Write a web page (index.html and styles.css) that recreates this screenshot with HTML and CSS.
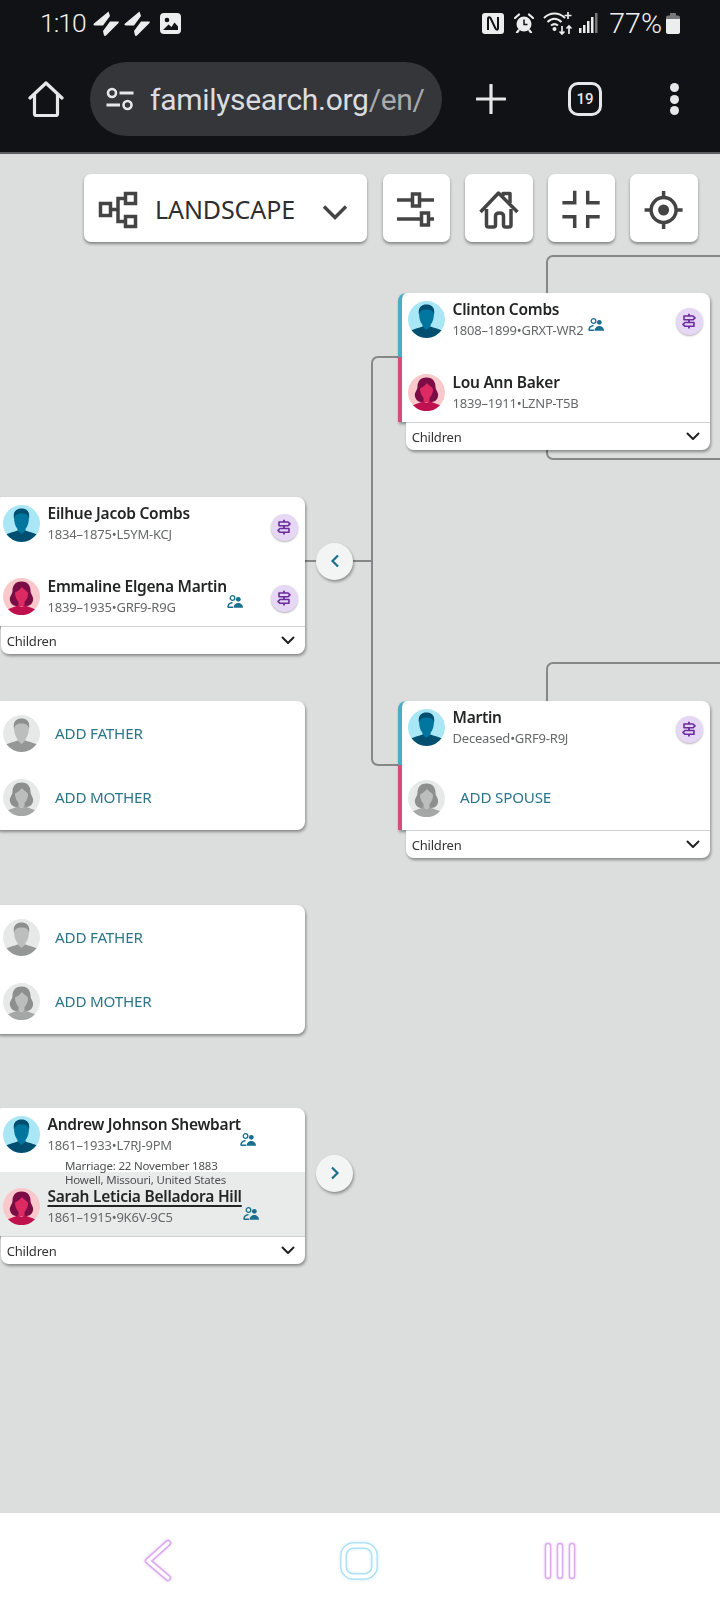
FILE: index.html
```html
<!DOCTYPE html>
<html lang="en">
<head>
<meta charset="utf-8">
<title>FamilySearch tree</title>
<link rel="stylesheet" href="styles.css">
</head>
<body>
<svg class="defs" aria-hidden="true">
  <symbol id="male" viewBox="0 0 37 37">
    <circle cx="18.5" cy="18.5" r="18.5" fill="#a9e6f6"/>
    <path d="M11 11C11 6 14 4 18.5 4S26 6 26 11C26 17 25 21 22.5 24V28L18.5 30 14.5 28V24C12 21 11 17 11 11Z" fill="#00769e"/>
    <path d="M11 14C9.500 6 14 3.500 18.500 3.500S27.500 6 26 14C25.500 10 23 8.500 18.500 8.500S11.500 10 11 14Z" fill="#004e70"/>
    <path d="M3.500 29.300C7 27.500 11 27 14.500 25.500L18.500 29 22.500 25.500C26 27 30 27.500 33.500 29.300A18.500 18.500 0 0 1 3.500 29.300Z" fill="#004e70"/>
  </symbol>
  <symbol id="female" viewBox="0 0 37 37">
    <circle cx="18.5" cy="18.5" r="18.500" fill="#f9c8cb"/>
    <path d="M18.500 3.500C11.500 3.500 9.500 8.500 9.500 12.500C9.500 16.500 6 18.500 7 22.500C8 27 11.500 28 14 28H23C25.500 28 29 27 30 22.500C31 18.500 27.500 16.500 27.500 12.500C27.500 8.500 25.500 3.500 18.500 3.500Z" fill="#7a0c46"/>
    <path d="M12 14.500C14.500 13.500 17 11.500 19 9C21 12 25 13 25 15.500C25 20 22.500 22.500 21.500 24V28H15.500V24C14.500 22.500 12 20 12 14.500Z" fill="#dd2a63"/>
    <path d="M5 31.300C8 29.500 12 29 15.500 27C17 29 20 29 21.500 27C25 29 29 29.500 32 31.300A18.500 18.500 0 0 1 5 31.300Z" fill="#c0114f"/>
  </symbol>
  <symbol id="male-empty" viewBox="0 0 37 37">
    <circle cx="18.5" cy="18.5" r="18.500" fill="#e7e9e9"/>
    <path d="M11 11C11 6 14 4 18.500 4S26 6 26 11C26 17 25 21 22.500 24V28L18.500 30 14.500 28V24C12 21 11 17 11 11Z" fill="#bcbebe"/>
    <path d="M11 14C9.500 6 14 3.500 18.500 3.500S27.500 6 26 14C25.500 10 23 8.500 18.500 8.500S11.500 10 11 14Z" fill="#8d8f8f"/>
    <path d="M3.500 29.300C7 27.500 11 27 14.500 25.500L18.500 29 22.500 25.500C26 27 30 27.500 33.500 29.300A18.500 18.500 0 0 1 3.500 29.300Z" fill="#959797"/>
  </symbol>
  <symbol id="female-empty" viewBox="0 0 37 37">
    <circle cx="18.5" cy="18.5" r="18.500" fill="#e7e9e9"/>
    <path d="M18.500 3.500C11.500 3.500 9.500 8.500 9.500 12.500C9.500 16.500 6 18.500 7 22.500C8 27 11.500 28 14 28H23C25.500 28 29 27 30 22.500C31 18.500 27.500 16.500 27.500 12.500C27.500 8.500 25.500 3.500 18.500 3.500Z" fill="#8d8f8f"/>
    <path d="M12 14.500C14.500 13.500 17 11.500 19 9C21 12 25 13 25 15.500C25 20 22.500 22.500 21.500 24V28H15.500V24C14.500 22.500 12 20 12 14.500Z" fill="#bcbebe"/>
    <path d="M5 31.300C8 29.500 12 29 15.500 27C17 29 20 29 21.500 27C25 29 29 29.500 32 31.300A18.500 18.500 0 0 1 5 31.300Z" fill="#a5a7a7"/>
  </symbol>
  <symbol id="sign" viewBox="0 0 16 16">
    <path d="M8 .8V3M8 6.800V9.500M8 13.200V15.400" fill="none" stroke="#6a2c9e" stroke-width="1.800"/>
    <path d="M3 3H12L14 4.900 12 6.800H3ZM13 9.500H4L2 11.400 4 13.300H13Z" fill="none" stroke="#6a2c9e" stroke-width="1.600" stroke-linejoin="round"/>
  </symbol>
  <symbol id="rel" viewBox="0 0 16 13">
    <circle cx="5.500" cy="3" r="2.300" fill="none" stroke="#1b6f8f" stroke-width="1.300"/>
    <path d="M1 12C1 9.500 3 8 5.500 7.500" fill="none" stroke="#1b6f8f" stroke-width="1.400"/>
    <path d="M.6 11.500H6V13H.6Z" fill="#1b6f8f"/>
    <circle cx="11.300" cy="4.300" r="2.400" fill="#1b6f8f"/>
    <path d="M6.500 12.800C6.500 9.800 9 8 11.300 8S16 9.800 16 12.800Z" fill="#1b6f8f"/>
  </symbol>
  <symbol id="chev" viewBox="0 0 14 9">
    <path d="M1.500 1.500 7 7 12.500 1.500" fill="none" stroke="#222" stroke-width="2" stroke-linecap="round" stroke-linejoin="round"/>
  </symbol>
  <symbol id="bolt" viewBox="0 0 26 25">
    <path d="M15.500.5 1 12.500C0 13.500.5 14.500 2 14.500H10L17 5ZM25 10.500H17L10 20 11 24.500C11.500 25 12.500 25 13 24.500L25.500 12C26 11 26 10.500 25 10.500Z" fill="#eceded"/>
  </symbol>
</svg>

<header class="chrome">
  <div class="status">
    <span class="time">1:10</span>
    <svg class="st-bolt" width="26" height="25"><use href="#bolt"/></svg>
    <svg class="st-bolt st-bolt-2" width="26" height="25"><use href="#bolt"/></svg>
    <svg class="st-img" width="21" height="21" viewBox="0 0 21 21">
      <rect width="21" height="21" rx="4" fill="#eceded"/>
      <circle cx="7" cy="7" r="2.300" fill="#111215"/>
      <path d="M3 17 8.500 11.500 11.500 14 14.500 9.500 18 13.500V17Z" fill="#111215"/>
    </svg>
    <div class="status-right">
      <svg width="22" height="21" viewBox="0 0 22 21">
        <rect width="22" height="21" rx="3" fill="#eceded"/>
        <path d="M6 17V5.500C6 4 7.500 4 8.500 5L13.500 15.500C14.500 17 16 17 16 15.500V4" fill="none" stroke="#111215" stroke-width="2"/>
      </svg>
      <svg class="st-alarm" width="20" height="20" viewBox="0 0 20 20">
        <circle cx="10" cy="11" r="7.500" fill="#eceded"/>
        <path d="M1 5 5 1.500M19 5 15 1.500M4.500 17.500 3 19.500M15.500 17.500 17 19.500" stroke="#eceded" stroke-width="2.200" stroke-linecap="round"/>
        <path d="M10 6.500V11.500H13.500" fill="none" stroke="#111215" stroke-width="1.500"/>
      </svg>
      <svg class="st-wifi" width="30" height="24" viewBox="0 0 30 24">
        <path d="M1 7C7 1 16 1 22 7M4.500 11C9 6.500 14 6.500 18.500 11M8 14.500C10.500 12.500 12.500 12.500 15 14.500" fill="none" stroke="#eceded" stroke-width="2"/>
        <circle cx="11.500" cy="18" r="2" fill="#eceded"/>
        <path d="M25 1V8M21.500 4.500H28.500M19 15V23M16.500 20.500 19 23 21.500 20.500M26 23V15M23.500 17.500 26 15 28.500 17.500" fill="none" stroke="#eceded" stroke-width="1.700"/>
      </svg>
      <svg class="st-signal" width="19" height="20" viewBox="0 0 19 20">
        <rect x="0" y="15" width="2.500" height="5" fill="#eceded"/>
        <rect x="4" y="12" width="2.500" height="8" fill="#eceded"/>
        <rect x="8" y="8" width="2.500" height="12" fill="#eceded"/>
        <rect x="12" y="4" width="2.500" height="16" fill="#eceded"/>
        <rect x="16" y="0" width="2.500" height="20" fill="#77787a"/>
      </svg>
      <span class="pct">77%</span>
      <svg class="st-batt" width="14" height="21" viewBox="0 0 14 21">
        <path d="M4 0H10V2.500H12C13.200 2.500 14 3.300 14 4.500V6H0V4.500C0 3.300.800 2.500 2 2.500H4Z" fill="#77787a"/>
        <path d="M0 6H14V19C14 20.200 13.200 21 12 21H2C.800 21 0 20.200 0 19Z" fill="#eceded"/>
      </svg>
    </div>
  </div>
  <div class="toolbar">
    <svg class="tb-home" width="36" height="36" viewBox="0 0 36 36">
      <path d="M2 17 18 2 34 17M6.500 14V33C6.500 34 7 34.500 8 34.500H28C29 34.500 29.500 34 29.500 33V14" fill="none" stroke="#e6e7e9" stroke-width="3.200" stroke-linecap="round" stroke-linejoin="round"/>
    </svg>
    <div class="pill">
      <svg class="pill-icon" width="28" height="24" viewBox="0 0 28 24">
        <circle cx="6" cy="6" r="4" fill="none" stroke="#e6e7e9" stroke-width="2.600"/>
        <circle cx="21.500" cy="18" r="4" fill="none" stroke="#e6e7e9" stroke-width="2.600"/>
        <path d="M13.500 6H27.500M.500 18H14" stroke="#e6e7e9" stroke-width="2.800"/>
      </svg>
      <span class="url">familysearch.org<span class="url-dim">/en/</span></span>
    </div>
    <svg class="tb-plus" width="30" height="30" viewBox="0 0 30 30">
      <path d="M15 1V29M1 15H29" stroke="#e6e7e9" stroke-width="3.200" stroke-linecap="round"/>
    </svg>
    <div class="tabs">19</div>
    <div class="menu"><i></i><i></i><i></i></div>
  </div>
</header>

<main class="canvas">
  <svg class="lines" width="720" height="1359" viewBox="0 0 720 1359">
    <path d="M547 140V108A6 6 0 0 1 553 102H720M547 296V299A6 6 0 0 0 553 305H720M547 547V515A6 6 0 0 1 553 509H720M305 407H372M398 203H378A6 6 0 0 0 372 209V605A6 6 0 0 0 378 611H398" fill="none" stroke="#858888" stroke-width="2"/>
  </svg>

  <div class="tools">
    <div class="tool tool-view">
      <svg width="44" height="44" viewBox="0 0 44 44" fill="none" stroke="#444" stroke-width="3.500">
        <rect x="5.500" y="17.500" width="10" height="12"/>
        <rect x="30.500" y="7.500" width="10" height="10"/>
        <rect x="30.500" y="30.500" width="10" height="10"/>
        <path d="M15 23.500H23M30 12.500H23V35.500H30"/>
      </svg>
      <span class="view-label">LANDSCAPE</span>
      <svg class="view-chev" width="26" height="16" viewBox="0 0 26 16">
        <path d="M2 2.500 13 13.500 24 2.500" fill="none" stroke="#444" stroke-width="3.400"/>
      </svg>
    </div>
    <div class="tool">
      <svg width="44" height="44" viewBox="0 0 44 44" fill="none" stroke="#444" stroke-width="3.500">
        <path d="M3 14H40M3 33H40"/>
        <rect x="18.500" y="8" width="7" height="12" fill="#fff"/>
        <rect x="27.500" y="27" width="7" height="12" fill="#fff"/>
      </svg>
    </div>
    <div class="tool">
      <svg width="44" height="44" viewBox="0 0 44 44" fill="none" stroke="#444" stroke-width="3.500" stroke-linejoin="round">
        <path d="M3.500 26 21.500 7 40.500 26"/>
        <path d="M9.500 23V39C9.500 40.500 10.500 41 11.500 41H16.500C17.500 41 18.500 40.500 18.500 39V30C18.500 28 20 27 22.500 27S26.500 28 26.500 30V39C26.500 40.500 27.500 41 28.500 41H32C33 41 34 40.500 34 39V23"/>
        <path d="M26 10V7.500H33V17"/>
      </svg>
    </div>
    <div class="tool">
      <svg width="44" height="44" viewBox="0 0 44 44" fill="none" stroke="#444" stroke-width="3.500">
        <path d="M3.400 16.700H15.700V4.700M28.700 4.700V16.700H40.700M3.400 30.700H15.700V42M28.700 42V30.700H40.700"/>
      </svg>
    </div>
    <div class="tool">
      <svg width="44" height="44" viewBox="0 0 44 44" fill="none" stroke="#444" stroke-width="3.500">
        <circle cx="21.600" cy="24" r="12.500"/>
        <circle cx="21.600" cy="24" r="5.500" fill="#444" stroke="none"/>
        <path d="M21.600 5V11M21.600 37V43M2.600 24H9M34 24H40.600"/>
      </svg>
    </div>
  </div>

  <article class="card card-clinton">
    <div class="row row-a">
      <svg class="avatar"><use href="#male"/></svg>
      <div class="who"><div class="name">Clinton Combs</div><div class="sub">1808–1899•GRXT-WR2</div></div>
      <svg class="rel rel-clinton"><use href="#rel"/></svg>
      <div class="signpost"><svg><use href="#sign"/></svg></div>
    </div>
    <div class="row row-b">
      <svg class="avatar"><use href="#female"/></svg>
      <div class="who"><div class="name">Lou Ann Baker</div><div class="sub">1839–1911•LZNP-T5B</div></div>
    </div>
    <div class="kids"><span>Children</span><svg class="kids-chev"><use href="#chev"/></svg></div>
  </article>

  <article class="card card-eilhue">
    <div class="row row-a">
      <svg class="avatar"><use href="#male"/></svg>
      <div class="who"><div class="name">Eilhue Jacob Combs</div><div class="sub">1834–1875•L5YM-KCJ</div></div>
      <div class="signpost signpost-eilhue"><svg><use href="#sign"/></svg></div>
    </div>
    <div class="row row-b">
      <svg class="avatar"><use href="#female"/></svg>
      <div class="who"><div class="name">Emmaline Elgena Martin</div><div class="sub">1839–1935•GRF9-R9G</div></div>
      <svg class="rel rel-emmaline"><use href="#rel"/></svg>
      <div class="signpost signpost-emmaline"><svg><use href="#sign"/></svg></div>
    </div>
    <div class="kids"><span>Children</span><svg class="kids-chev"><use href="#chev"/></svg></div>
  </article>
  <button class="round round-back" aria-label="Collapse"><svg width="10" height="14" viewBox="0 0 10 14"><path d="M8 1.500 2.500 7 8 12.500" fill="none" stroke="#1a6f8a" stroke-width="2.200"/></svg></button>

  <article class="card card-parents card-add-1">
    <div class="row row-add"><svg class="avatar"><use href="#male-empty"/></svg><span class="add">ADD FATHER</span></div>
    <div class="row row-add"><svg class="avatar"><use href="#female-empty"/></svg><span class="add">ADD MOTHER</span></div>
  </article>

  <article class="card card-parents card-add-2">
    <div class="row row-add"><svg class="avatar"><use href="#male-empty"/></svg><span class="add">ADD FATHER</span></div>
    <div class="row row-add"><svg class="avatar"><use href="#female-empty"/></svg><span class="add">ADD MOTHER</span></div>
  </article>

  <article class="card card-martin">
    <div class="row row-a">
      <svg class="avatar"><use href="#male"/></svg>
      <div class="who"><div class="name">Martin</div><div class="sub">Deceased•GRF9-R9J</div></div>
      <div class="signpost"><svg><use href="#sign"/></svg></div>
    </div>
    <div class="row row-spouse">
      <svg class="avatar"><use href="#female-empty"/></svg>
      <span class="add">ADD SPOUSE</span>
    </div>
    <div class="kids"><span>Children</span><svg class="kids-chev"><use href="#chev"/></svg></div>
  </article>

  <article class="card card-andrew">
    <div class="row row-a">
      <svg class="avatar"><use href="#male"/></svg>
      <div class="who"><div class="name">Andrew Johnson Shewbart</div><div class="sub">1861–1933•L7RJ-9PM</div></div>
      <svg class="rel rel-andrew"><use href="#rel"/></svg>
    </div>
    <div class="row row-c row-focus">
      <svg class="avatar"><use href="#female"/></svg>
      <div class="who"><div class="name name-focus">Sarah Leticia Belladora Hill</div><div class="sub">1861–1915•9K6V-9C5</div></div>
      <svg class="rel rel-sarah"><use href="#rel"/></svg>
    </div>
    <div class="marriage">Marriage: 22 November 1883<br>Howell, Missouri, United States</div>
    <div class="kids"><span>Children</span><svg class="kids-chev"><use href="#chev"/></svg></div>
  </article>
  <button class="round round-next" aria-label="Expand"><svg width="10" height="14" viewBox="0 0 10 14"><path d="M2 1.500 7.500 7 2 12.500" fill="none" stroke="#1a6f8a" stroke-width="2.200"/></svg></button>
</main>

<nav class="nav">
  <svg class="nav-back" width="34" height="44" viewBox="0 0 34 44" fill="none" stroke-linecap="round" stroke-linejoin="round">
    <path d="M27 4 7 22 27 39" stroke="#dca9f2" stroke-width="6.500"/>
    <path d="M27 4 7 22 27 39" stroke="#fff" stroke-width="3.500"/>
  </svg>
  <svg class="nav-home" width="44" height="44" viewBox="0 0 44 44" fill="none">
    <rect x="6.500" y="6.500" width="31" height="31" rx="10" stroke="#a6e0f5" stroke-width="6.500"/>
    <rect x="6.500" y="6.500" width="31" height="31" rx="10" stroke="#fff" stroke-width="4"/>
  </svg>
  <svg class="nav-recent" width="44" height="44" viewBox="0 0 44 44" fill="none" stroke-linecap="round">
    <path d="M10 7V37M22 7V37M34 7V37" stroke="#dca9f2" stroke-width="6.500"/>
    <path d="M10 7V37M22 7V37M34 7V37" stroke="#fff" stroke-width="3.500"/>
  </svg>
</nav>
</body>
</html>
```

FILE: styles.css
```css
* { box-sizing: border-box; }

html, body {
  margin: 0;
  padding: 0;
}

body {
  width: 720px;
  height: 1605px;
  display: flex;
  flex-direction: column;
  overflow: hidden;
  background: #dcdedd;
  font-family: "Noto Sans", sans-serif;
}

.defs {
  position: absolute;
  width: 0;
  height: 0;
}

/* Phone + browser chrome */
.chrome {
  flex: none;
  height: 154px;
  background: #111215;
  border-bottom: 2px solid #5b5e60;
}

.status {
  height: 48px;
  display: flex;
  align-items: center;
  padding: 0 40px 2px 40px;
  color: #f2f2f2;
  font-family: Roboto, sans-serif;
}

.time {
  font-size: 26.5px;
  font-weight: 300;
  letter-spacing: -1px;
  position: relative;
  top: -1px;
}

.st-bolt { margin-left: 7px; }
.st-bolt-2 { margin-left: 5px; }
.st-img { margin-left: 10px; }

.status-right {
  margin-left: auto;
  display: flex;
  align-items: center;
}

.st-alarm { margin-left: 10px; }
.st-wifi { margin-left: 9px; }
.st-signal { margin-left: 6px; }

.pct {
  margin-left: 11px;
  font-size: 28.5px;
  font-weight: 300;
}

.st-batt { margin-left: 4px; }

.toolbar {
  height: 104px;
  display: flex;
  align-items: center;
  padding-left: 28px;
  padding-bottom: 2px;
}

.pill {
  margin-left: 26px;
  width: 352px;
  height: 74px;
  border-radius: 37px;
  background: #35363a;
  display: flex;
  align-items: center;
  padding-left: 16px;
}

.url {
  margin-left: 16px;
  font-family: Roboto, sans-serif;
  font-size: 30px;
  letter-spacing: -.3px;
  color: #dcdde0;
  white-space: nowrap;
}

.url-dim { color: #a9aaad; }

.tb-plus { margin-left: 34px; }

.tabs {
  margin-left: 62px;
  width: 34px;
  height: 34px;
  border: 3px solid #e6e7e9;
  border-radius: 10px;
  color: #e6e7e9;
  font: 500 15px/28px Roboto, sans-serif;
  text-align: center;
}

.menu {
  margin-left: 68px;
  display: flex;
  flex-direction: column;
  gap: 2.500px;
}

.menu i {
  display: block;
  width: 9px;
  height: 9px;
  border-radius: 50%;
  background: #e6e7e9;
}

/* Tree canvas */
.canvas {
  position: relative;
  flex: 1;
  overflow: hidden;
  background: #dcdedd;
}

.lines {
  position: absolute;
  left: 0;
  top: 0;
}

.tools {
  position: relative;
  display: flex;
  gap: 15px;
  padding: 20px 0 0 84px;
}

.tool {
  flex: none;
  width: 67.500px;
  height: 68px;
  background: #fff;
  border-radius: 7px;
  box-shadow: 0 2px 3px rgba(0, 0, 0, .4);
  display: flex;
  align-items: center;
  justify-content: center;
}

.tool-view {
  width: 283px;
  margin-right: .500px;
  justify-content: flex-start;
  padding-left: 11px;
}

.view-label {
  margin-left: 16px;
  font-size: 25px;
  color: #2e2e2e;
  letter-spacing: -.1px;
  position: relative;
  top: 1px;
}

.view-chev {
  margin-left: 27px;
  position: relative;
  top: 4px;
}

/* Person cards: nodes of the diagram */
.card {
  position: absolute;
  display: flex;
  flex-direction: column;
  width: 312px;
  filter: drop-shadow(1px 2px 1.500px rgba(0, 0, 0, .38));
}

.card-clinton { left: 398px; top: 139px; }
.card-eilhue { left: -7px; top: 343px; }
.card-martin { left: 398px; top: 547px; }
.card-andrew { left: -7px; top: 954px; }
.card-add-1 { left: -7px; top: 547px; }
.card-add-2 { left: -7px; top: 751px; }

.row {
  position: relative;
  height: 65px;
  display: flex;
  align-items: flex-start;
  gap: 8px;
  background: #fff;
  border-left: 4px solid #4bacc6;
  padding: 7.500px 0 0 5.500px;
}

.row-a {
  height: 64px;
  border-top-left-radius: 8px;
  border-top-right-radius: 8px;
}

.row-b {
  border-left-color: #d14f78;
  padding-top: 16.500px;
}

.row-c {
  height: 64px;
  border-left-color: #d14f78;
  padding-top: 15.500px;
}

.row-focus { background: #e9ebeb; }

.row-spouse {
  border-left-color: #d14f78;
  padding-top: 14.500px;
  align-items: flex-start;
}

.row-add {
  align-items: center;
  padding: 0 0 0 5.500px;
  border-left: 4px solid transparent;
  height: 64px;
}

.card-parents .row-add:first-child {
  border-radius: 8px 8px 0 0;
}

.card-parents .row-add:last-child {
  height: 65px;
  border-radius: 0 0 8px 8px;
}

.avatar {
  flex: none;
  width: 37px;
  height: 37px;
}

.who {
  display: flex;
  flex-direction: column;
  gap: 2px;
  min-width: 0;
  margin-top: -2px;
}

.name {
  font-size: 15.500px;
  letter-spacing: -.25px;
  line-height: 20px;
  font-weight: 600;
  color: #232424;
  white-space: nowrap;
}

.name-focus {
  text-decoration: underline;
  text-underline-offset: 3px;
  text-decoration-thickness: 1.500px;
}

.sub {
  font-size: 13px;
  letter-spacing: -.2px;
  line-height: 18px;
  color: #666869;
  white-space: nowrap;
}

.add {
  margin-left: 7.500px;
  margin-top: -1px;
  font-size: 15.200px;
  letter-spacing: -.2px;
  color: #2b7689;
  white-space: nowrap;
}

.row-spouse .add {
  margin-top: 0;
  line-height: 35px;
}

.rel {
  position: absolute;
  width: 16px;
  height: 13px;
}

.rel-clinton { left: 186px; top: 25px; }
.rel-emmaline { left: 230px; top: 34px; }
.rel-andrew { left: 243px; top: 25px; }
.rel-sarah { left: 246px; top: 34.500px; }

.signpost {
  position: absolute;
  right: 7.500px;
  top: 14.500px;
  width: 27px;
  height: 27px;
  border-radius: 50%;
  background: #e6d8f5;
  box-shadow: 0 1px 2px rgba(0, 0, 0, .3);
  display: flex;
  align-items: center;
  justify-content: center;
}

.signpost svg {
  width: 16px;
  height: 16px;
}

.signpost-eilhue { top: 16.500px; }
.signpost-emmaline { top: 23.500px; }

.kids {
  margin-left: 7.700px;
  height: 28px;
  background: #fff;
  border-top: 1px solid #cfd1d1;
  border-radius: 0 0 8px 8px;
  display: flex;
  align-items: center;
  justify-content: space-between;
  padding: 0 10px 0 6px;
  font-size: 13px;
  letter-spacing: -.2px;
  color: #333;
}

.kids-chev {
  width: 14px;
  height: 9px;
}

.marriage {
  position: absolute;
  left: 72px;
  top: 51px;
  font-size: 11.500px;
  letter-spacing: -.2px;
  line-height: 14px;
  color: #4d4f50;
  white-space: nowrap;
}

.round {
  position: absolute;
  width: 37px;
  height: 37px;
  padding: 0;
  border: 0;
  border-radius: 50%;
  background: #f3f4f4;
  box-shadow: 1px 2px 3px rgba(0, 0, 0, .35);
  display: flex;
  align-items: center;
  justify-content: center;
}

.round-back { left: 316px; top: 388.500px; }
.round-next { left: 316px; top: 1000.500px; }

/* Android navigation bar */
.nav {
  flex: none;
  height: 92px;
  background: #fff;
  display: flex;
  align-items: center;
  padding: 4px 0 0 141px;
}

.nav-back,
.nav-home,
.nav-recent {
  filter: drop-shadow(0 0 1.500px rgba(200, 150, 240, .5));
}

.nav-home {
  margin-left: 161.500px;
  filter: drop-shadow(0 0 1.500px rgba(130, 210, 240, .5));
}

.nav-recent { margin-left: 157.500px; }
```
